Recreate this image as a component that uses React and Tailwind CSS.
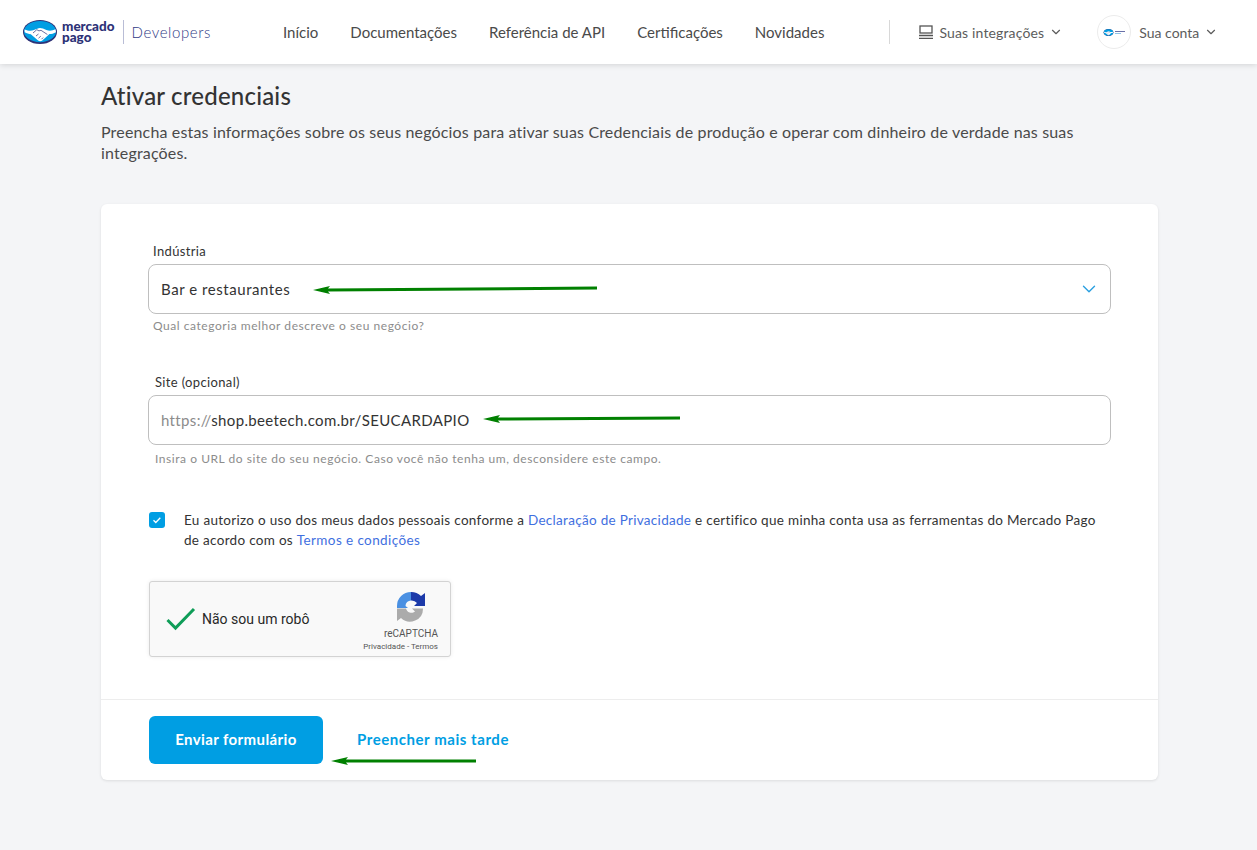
import React from "react";
import { ChevronDown } from "lucide-react";

const navLinks = ["Início", "Documentações", "Referência de API", "Certificações", "Novidades"];

function MpMark({ className }) {
  return (
    <svg viewBox="0 0 34 24" className={className}>
      <ellipse cx="17" cy="12" rx="17" ry="12" fill="#2d3277" />
      <ellipse cx="17" cy="11.6" rx="16" ry="10.6" fill="#009ee3" />
      <path
        d="M1.500 9.500c4 1.600 6.500 1.800 9.500.6 2.500-1 4.200-2 6-2s4 1 6.400 1.900c3 1.100 6 .8 9.100-.8l.5 3c-2.500 1.300-4.500 1.800-6.500 1.800l-7.200 6.500c-1.200.9-3 .9-4.200 0l-7.300-6.300c-2.100-.2-4-.9-6.100-2z"
        fill="#fff"
      />
      <path d="M10 13l3.800-3.300 2.200 1.200 2-.6 6.400 4.200M13 16l2.500-2M15.500 18.200l2.300-2M18.500 19.200l1.600-1.600" stroke="#2d3277" strokeWidth="0.7" fill="none" />
    </svg>
  );
}

function RecaptchaLogo() {
  return (
    <svg viewBox="0 0 32 32" className="mr-[11px] h-8 w-8">
      <path d="M2 15A14 14 0 0 1 16 1v8.500A5.500 5.500 0 0 0 10.500 15l2.500 2H2z" fill="#4a90e2" />
      <path d="M16 1a14 14 0 0 1 10 4l4-3v13H19l3-3A7 7 0 0 0 16 9.500z" fill="#1c3aa9" />
      <path d="M2 17.500h9a5.500 5.500 0 0 0 9 3l-3-3h11A13 13 0 0 1 6 27l-4 3z" fill="#ababab" />
    </svg>
  );
}

function GreenArrow({ className, width, rise = 0 }) {
  const c = 6;
  return (
    <svg className={`absolute ${className}`} width={width} height={12} viewBox={`0 0 ${width} 12`}>
      <path d={`M0 ${c}L17 ${c - 4}L15 ${c - 1.5}L${width} ${c - 1.5 - rise}V${c + 1.5 - rise}L15 ${c + 1.5}L17 ${c + 4}z`} fill="#008000" />
    </svg>
  );
}

function Header() {
  return (
    <header className="relative z-10 flex h-16 items-center bg-white shadow-[0_1px_6px_rgba(0,0,0,0.14)]">
      <div className="ml-[23px] flex w-[222px] items-center">
        <MpMark className="h-[24px] w-[34px]" />
        <div className="ml-[5px] text-[13.5px] font-black leading-[11px] text-[#2d3277]">
          <div>mercado</div>
          <div>pago</div>
        </div>
        <div className="ml-[8px] h-6 w-px bg-[#b9bdd6]" />
        <span className="ml-2 text-[15px] font-light tracking-[0.6px] text-[#2f3a85]">Developers</span>
      </div>
      <nav className="ml-[38px] flex gap-8 text-[15px] text-[#4a4a4a]">
        {navLinks.map((link) => (
          <a key={link}>{link}</a>
        ))}
      </nav>
      <div className="ml-[65px] h-6 w-px bg-[#d8d8d8]" />
      <div className="ml-[29px] flex items-center text-[14px] tracking-[0.15px] text-[#5c5c5c]">
        <svg viewBox="0 0 14 14" className="mr-[6px] h-[14px] w-[14px]" fill="none" stroke="#555" strokeWidth="1.3">
          <rect x="1" y="1" width="12" height="7" />
          <path d="M0 10.500h14M0 13.300h14" />
        </svg>
        Suas integrações
        <ChevronDown className="ml-[5px] h-[14px] w-[14px]" strokeWidth={2} />
      </div>
      <div className="ml-[34px] flex h-[34px] w-[34px] items-center justify-center rounded-full border border-[#ececec]">
        <MpMark className="h-[7px] w-[11px]" />
        <div className="ml-px flex w-[10px] flex-col gap-px">
          <div className="h-px w-full bg-[#6a70a8]" />
          <div className="h-px w-[6px] bg-[#8fc4e8]" />
        </div>
      </div>
      <span className="ml-2 text-[14px] text-[#5c5c5c]">Sua conta</span>
      <ChevronDown className="ml-[5px] h-[14px] w-[14px] text-[#5c5c5c]" strokeWidth={2} />
    </header>
  );
}

function Field({ label, labelClass, hint, hintClass, children }) {
  return (
    <div>
      <div className={`text-[13px] leading-[16px] tracking-[0.35px] text-[#333] ${labelClass}`}>{label}</div>
      <div className="mt-[5px] flex h-[50px] items-center justify-between rounded-[8px] border border-[#bfbfbf] pl-3 pr-[10px] text-[15px] text-[#333]">
        {children}
      </div>
      <div className={`text-[12px] leading-[15px] tracking-[0.55px] text-[#8c8c8c] ${hintClass}`}>{hint}</div>
    </div>
  );
}

export default function App() {
  return (
    <div className="min-h-[850px] bg-[#f4f5f7] font-['Lato','Liberation_Sans',sans-serif]">
      <Header />
      <main className="ml-[101px] w-[1057px]">
        <h1 className="pt-[18px] text-[24px] font-medium leading-[28px] tracking-[0.2px] text-[#333]">Ativar credenciais</h1>
        <p className="mt-[11px] w-[1000px] text-[16px] leading-[21px] tracking-[0.16px] text-[#4a4a4a]">
          Preencha estas informações sobre os seus negócios para ativar suas Credenciais de produção e operar com dinheiro de verdade nas suas integrações.
        </p>

        <section className="relative mt-[41px] h-[576px] rounded-[6px] bg-white shadow-[0_1px_3px_rgba(0,0,0,0.1)]">
          <div className="px-[47px] pt-[39px]">
            <Field label="Indústria" labelClass="pl-[5px]" hint="Qual categoria melhor descreve o seu negócio?" hintClass="mt-[4px] pl-[5px]">
              <span className="tracking-[0.55px]">Bar e restaurantes</span>
              <ChevronDown className="h-[22px] w-[22px] text-[#2a9fe0]" strokeWidth={1.5} />
            </Field>
            <div className="mt-[41px]">
              <Field label="Site (opcional)" labelClass="pl-[7px]" hint="Insira o URL do site do seu negócio. Caso você não tenha um, desconsidere este campo." hintClass="mt-[6px] pl-[7px]">
                <span className="tracking-[0.36px]">
                  <span className="text-[#8c8c8c]">https://</span>shop.beetech.com.br/SEUCARDAPIO
                </span>
              </Field>
            </div>

            <div className="mt-[44px] flex items-start pl-px">
              <span className="mt-[2px] flex h-4 w-4 shrink-0 items-center justify-center rounded-[3px] bg-[#009ee3]">
                <svg viewBox="0 0 16 16" className="h-4 w-4" fill="none" stroke="#fff" strokeWidth="1.3">
                  <path d="M4.500 8.200l2.300 2.300 4.500-4.800" />
                </svg>
              </span>
              <p className="ml-[19px] w-[916px] text-[13.5px] leading-[20px] tracking-[0.3px] text-[#333]">
                Eu autorizo o uso dos meus dados pessoais conforme a <a className="text-[#3f6fe0]">Declaração de Privacidade</a> e certifico que minha conta usa as ferramentas do Mercado Pago de acordo com os <a className="tracking-[0.4px] text-[#3f6fe0]">Termos e condições</a>
              </p>
            </div>

            <div className="ml-px mt-[31px] flex h-[76px] w-[302px] items-center rounded-[3px] border border-[#d3d3d3] bg-[#f9f9f9] shadow-[0_0_4px_rgba(0,0,0,0.08)]">
              <svg viewBox="0 0 30 24" className="ml-4 h-6 w-[30px]" fill="none" stroke="#0f9d58" strokeWidth="3">
                <path d="M1.500 13l8 8L28 2" />
              </svg>
              <span className="ml-[6px] font-['Roboto',sans-serif] text-[14px] text-[#282828]">Não sou um robô</span>
              <div className="ml-auto mr-3 flex flex-col items-end pt-[6px] font-['Roboto',sans-serif] text-[#555]">
                <RecaptchaLogo />
                <span className="mt-[5px] text-[10px] leading-[12px]">reCAPTCHA</span>
                <span className="mt-px whitespace-nowrap text-[8px] leading-[12px]">Privacidade - Termos</span>
              </div>
            </div>
          </div>

          <footer className="absolute inset-x-0 bottom-0 flex h-[81px] items-start border-t border-[#ededed] px-[48px] pt-4">
            <button className="h-12 w-[174px] rounded-[6px] bg-[#009ee3] pb-[2px] text-[15px] font-bold tracking-[0.4px] text-white">
              Enviar formulário
            </button>
            <a className="ml-[34px] mt-[14px] text-[15px] font-bold leading-[18px] tracking-[0.55px] text-[#009ee3]">Preencher mais tarde</a>
          </footer>

          <GreenArrow className="left-[212px] top-[80px]" width={284} rise={2} />
          <GreenArrow className="left-[382px] top-[209px]" width={197} rise={1} />
          <GreenArrow className="left-[230px] top-[551px]" width={145} />
        </section>
      </main>
    </div>
  );
}
